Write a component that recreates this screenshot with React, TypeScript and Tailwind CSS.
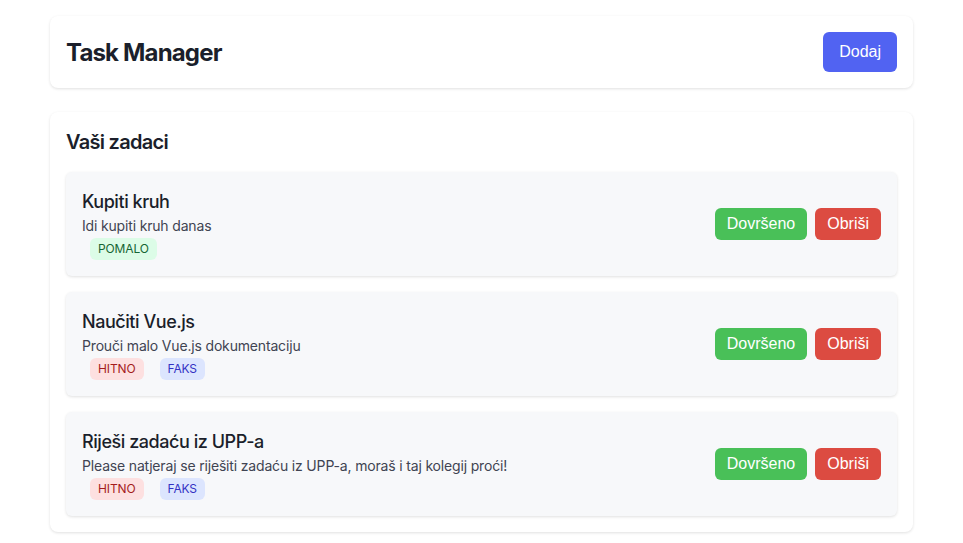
const tasks = [
  {
    title: "Kupiti kruh",
    desc: "Idi kupiti kruh danas",
    tags: ["POMALO"],
  },
  {
    title: "Naučiti Vue.js",
    desc: "Prouči malo Vue.js dokumentaciju",
    tags: ["HITNO", "FAKS"],
  },
  {
    title: "Riješi zadaću iz UPP-a",
    desc: "Please natjeraj se riješiti zadaću iz UPP-a, moraš i taj kolegij proći!",
    tags: ["HITNO", "FAKS"],
  },
];

const tagStyles: Record<string, string> = {
  POMALO: "bg-[#dcfce7] text-[#166534]",
  HITNO: "bg-[#fde0e0] text-[#a51d1d]",
  FAKS: "bg-[#dce5fe] text-[#3431c4]",
};

const btnFont = "font-['Liberation_Sans',Arial,sans-serif]";

const App = () => {
  return (
    <div className="min-h-screen bg-white font-['Inter',sans-serif] text-[#1b1f2b]">
      <div className="mx-[50px] pt-4 flex flex-col gap-6">
        <div className="flex items-center justify-between bg-white rounded-lg shadow-[0_1px_3px_rgba(0,0,0,0.12)] p-4">
          <h1 className="text-2xl font-bold tracking-[-0.035em] pt-0.5">Task Manager</h1>
          <button
            className={`${btnFont} bg-[#5163f2] text-white text-base h-10 px-4 rounded-md`}
          >
            Dodaj
          </button>
        </div>

        <div className="bg-white rounded-lg shadow-[0_1px_3px_rgba(0,0,0,0.12)] p-4">
          <h2 className="text-xl font-semibold leading-7 mb-4 tracking-[-0.036em]">Vaši zadaci</h2>
          <div className="flex flex-col gap-4">
            {tasks.map((task) => (
              <div
                key={task.title}
                className="flex items-center justify-between bg-[#f7f8fa] rounded-md shadow-[0_1px_3px_rgba(0,0,0,0.12)] p-4"
              >
                <div>
                  <h3 className="text-lg font-medium leading-7 tracking-[-0.025em]">{task.title}</h3>
                  <p className="text-sm text-[#3f4452] leading-5 tracking-[-0.012em]">{task.desc}</p>
                  <div className="flex mt-0.5">
                    {task.tags.map((tag) => (
                      <span
                        key={tag}
                        className={`mx-2 px-2 py-[3px] rounded-md text-xs leading-4 tracking-[-0.01em] ${tagStyles[tag]}`}
                      >
                        {tag}
                      </span>
                    ))}
                  </div>
                </div>
                <div className="flex gap-2">
                  <button
                    className={`${btnFont} bg-[#49c058] text-white text-base h-8 px-3 rounded-md`}
                  >
                    Dovršeno
                  </button>
                  <button
                    className={`${btnFont} bg-[#dc4b41] text-white text-base h-8 px-3 rounded-md`}
                  >
                    Obriši
                  </button>
                </div>
              </div>
            ))}
          </div>
        </div>
      </div>
    </div>
  );
};

export default App;
